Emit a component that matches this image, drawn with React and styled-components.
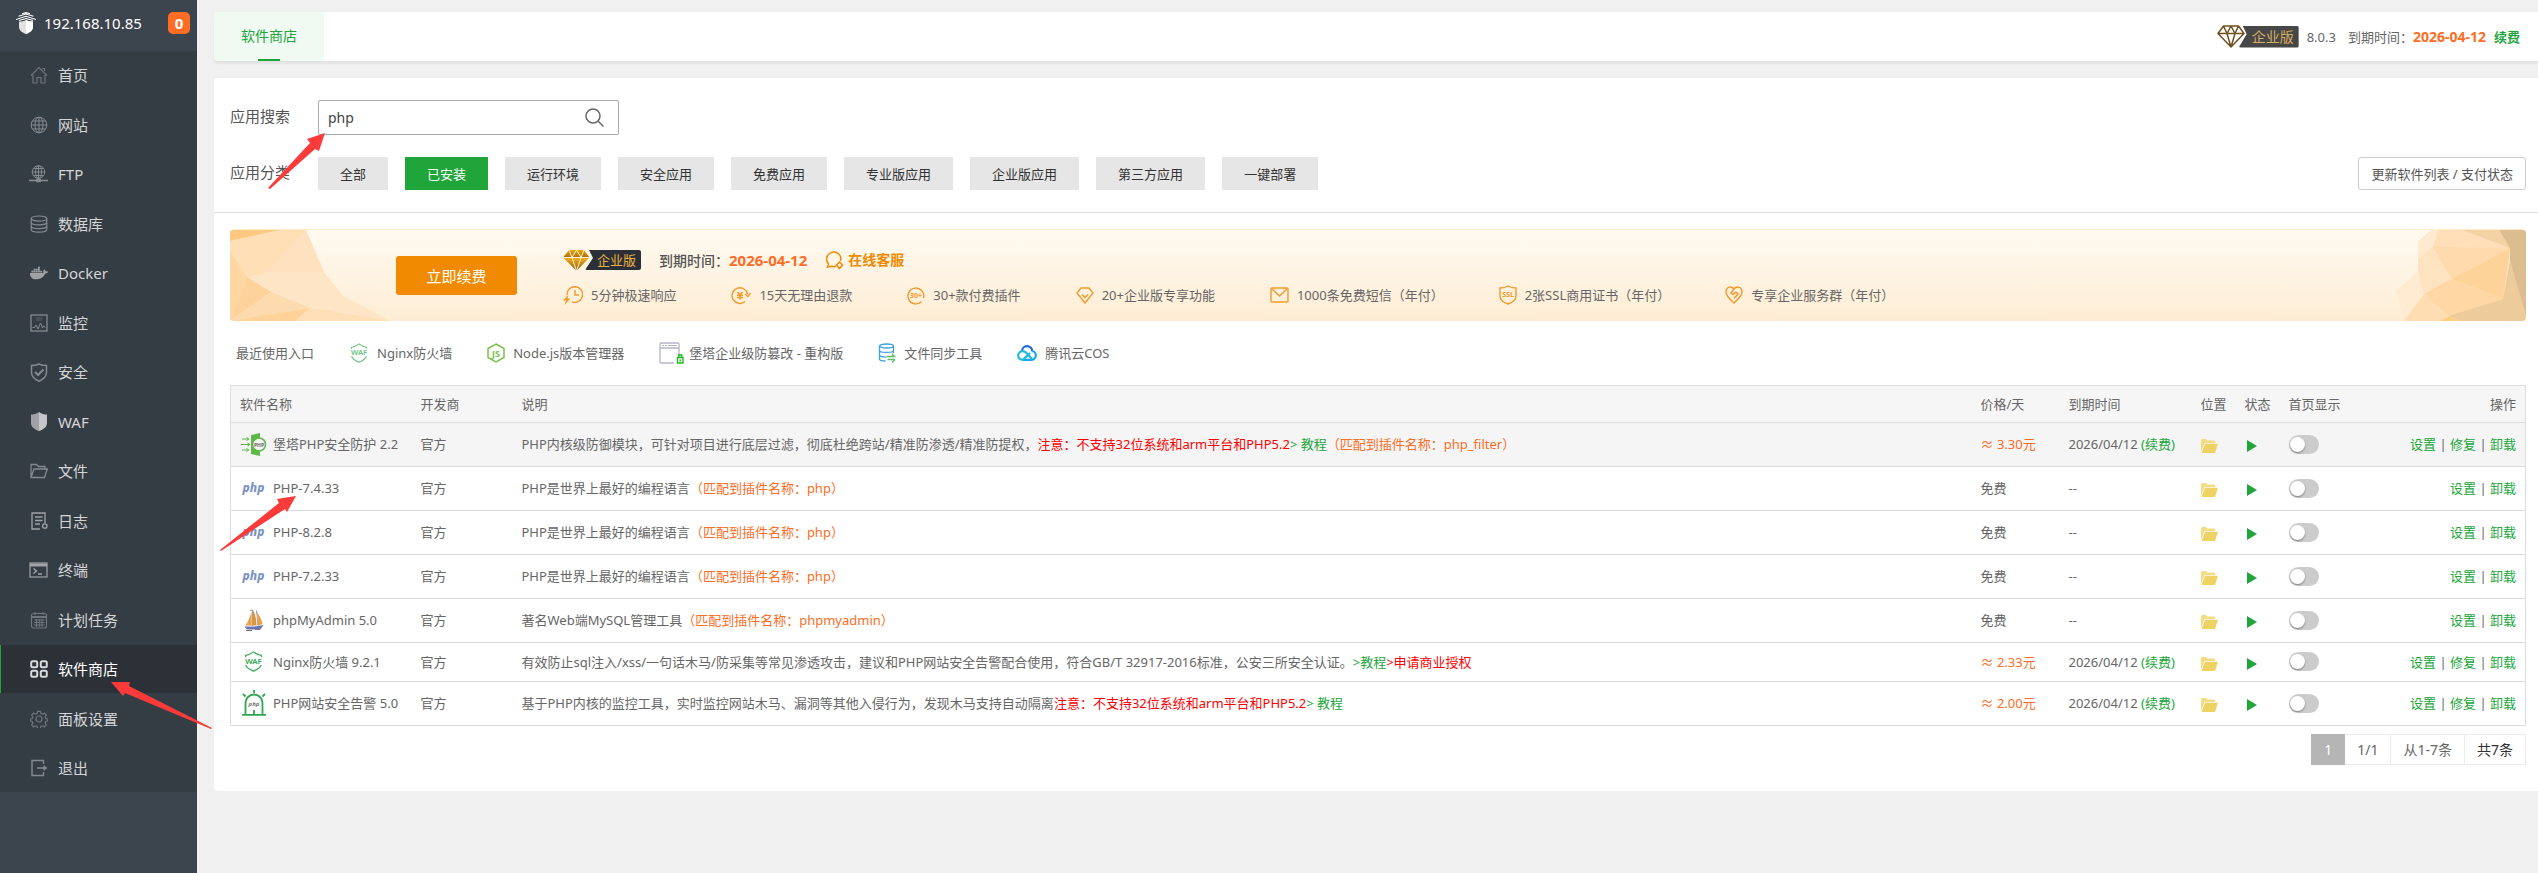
import React from 'react';
import styled, { createGlobalStyle } from 'styled-components';
import { FaDocker } from 'react-icons/fa';

const fontStack = "'Noto Sans', 'Noto Sans CJK SC', sans-serif";

/* ---------- icons ---------- */

const Line = ({ children, w = 18, h = 18, box = '0 0 18 18', sw = 1.2 }) => (
	<svg
		width={w}
		height={h}
		viewBox={box}
		fill='none'
		stroke='currentColor'
		strokeWidth={sw}
		aria-hidden='true'
	>
		{children}
	</svg>
);

const HomeIcon = () => (
	<Line>
		<path d='M1 9.5 9 1.5l8 8M3 9v8h4v-5.5h4V17h4V9M12.5 2.5h2V5' />
	</Line>
);

const GlobeIcon = () => (
	<Line sw={1}>
		<circle cx='9' cy='9' r='7.8' />
		<ellipse cx='9' cy='9' rx='4' ry='7.8' />
		<path d='M9 1v16M1 9h16M2.5 5h13M2.5 13h13' />
	</Line>
);

const FtpIcon = () => (
	<Line w={19} box='0 0 19 18' sw={1}>
		<circle cx='9.5' cy='7' r='6.3' />
		<ellipse cx='9.5' cy='7' rx='3' ry='6.3' />
		<path d='M9.5 1v13M3 7h13M4.5 3.5h10M4.5 10.5h10' />
		<path d='M0 15.5h19' strokeWidth='1.6' />
		<path d='M7 15.5h5' strokeWidth='3.4' />
	</Line>
);

const DatabaseIcon = () => (
	<Line>
		<ellipse cx='9' cy='3.6' rx='7.8' ry='2.6' />
		<path d='M1.2 3.6v11c0 1.5 3.5 2.6 7.8 2.6s7.8-1.1 7.8-2.6v-11M1.2 7.3c0 1.5 3.5 2.6 7.8 2.6s7.8-1.1 7.8-2.6M1.2 11c0 1.5 3.5 2.6 7.8 2.6s7.8-1.1 7.8-2.6' />
	</Line>
);

const DockerIcon = () => <FaDocker size={18} aria-hidden='true' />;

const MonitorIcon = () => (
	<Line sw={1.3}>
		<rect x='1' y='1' width='16' height='16' />
		<path d='M6 4h6M6 6h6' strokeWidth='1' opacity='0.5' />
		<path d='M2.5 13.5h2L6 11l2 4 2.5-6 2 5 1-2 2 1.5' strokeWidth='1' />
	</Line>
);

const SecurityIcon = () => (
	<Line h={19} box='0 0 18 19' sw={1.5}>
		<path d='M9 1c2.5 1.3 5 1.6 7.5 1.6v7c0 4-3 6.6-7.5 8.6-4.5-2-7.5-4.6-7.5-8.6v-7C4 2.6 6.5 2.3 9 1z' />
		<path d='m5 9 3 3 5.5-5.5' strokeWidth='2' />
	</Line>
);

const WafIcon = () => (
	<svg width='18' height='19' viewBox='0 0 18 19' aria-hidden='true'>
		<path d='M9 0c2.5 2 5.5 2.5 8 2.5V11c0 4-3.5 6.5-8 8z' fill='#c4c6c9' />
		<path d='M9 0C6.5 2 3.5 2.5 1 2.5V11c0 4 3.5 6.5 8 8z' fill='#a0a2a5' />
	</svg>
);

const FileIcon = () => (
	<Line sw={1.3}>
		<path d='M1 15.5V2.5h5.5l2 2H15V7M1 15.5 4 7h13.3l-2.8 8.5z' />
	</Line>
);

const LogIcon = () => (
	<Line sw={1.3}>
		<path d='M10 17H2V1h13v10M5 5h7.5M5 8.5h7.5M5 12h5' />
		<circle cx='14.8' cy='14' r='2.2' />
	</Line>
);

const TerminalIcon = () => (
	<Line w={19} box='0 0 19 18'>
		<rect x='1' y='2' width='17' height='14' />
		<path d='M1 4h17' strokeWidth='3' />
		<path d='m4.5 7.5 3 2.5-3 2.5M9 13h4' strokeWidth='1.4' />
	</Line>
);

const CalendarIcon = () => (
	<Line>
		<rect x='1.5' y='2.5' width='15' height='14.5' rx='2' />
		<path d='M1.5 6h15' strokeWidth='2' />
		<path
			d='M5 1v3M13 1v3M4 9h10.5M4 11.5h10.5M4 14h10.5M6.5 8v8M9.3 8v8M12 8v8'
			strokeWidth='1'
		/>
	</Line>
);

const StoreIcon = () => (
	<Line sw={2}>
		<rect x='1.2' y='1.2' width='6' height='6' rx='1.5' />
		<rect x='10.8' y='1.2' width='6' height='6' rx='1.5' />
		<rect x='1.2' y='10.8' width='6' height='6' rx='1.5' />
		<rect x='10.8' y='10.8' width='6' height='6' rx='1.5' />
	</Line>
);

const GearIcon = () => (
	<Line>
		<circle cx='9' cy='9' r='3' />
		<path d='M7.6 1.4h2.8l.5 2.1 1.5.7 2-1.1 1.9 1.9-1.1 2 .6 1.5 2 .6v1.8l-2 .6-.6 1.5 1.1 2-1.9 1.9-2-1.1-1.5.7-.5 2H7.6l-.5-2-1.5-.7-2 1.1-1.9-1.9 1.1-2-.6-1.5-2-.6V9.1l2-.6.6-1.5-1.1-2 1.9-1.9 2 1.1 1.5-.7z' />
	</Line>
);

const ExitIcon = () => (
	<Line sw={1.4}>
		<path d='M13.5 5V1.5H2v15h11.5V13M7 9h9' />
		<path d='m13.5 6 4 3-4 3z' fill='currentColor' stroke='none' />
	</Line>
);

const LogoIcon = () => (
	<svg width='20' height='22' viewBox='0 0 20 22' fill='#fff' aria-hidden='true'>
		<path
			d='M10 8c2 1 4.500 1.500 7 1.500V15c0 3.500-3 5.500-7 7-4-1.500-7-3.500-7-7V9.500C5.500 9.500 8 9 10 8z'
			fill='#e0e2e4'
		/>
		<path d='M10 8v14c4-1.500 7-3.500 7-7V9.500c-2.500 0-5-.5-7-1.500z' />
		<path
			d='M0 7.500 10 4.300l10 3.200M2.500 4.300 10 2l7.500 2.300M6 1.800 10 .6l4 1.200M3 8.500l7-2 7 2'
			fill='none'
			stroke='#fff'
			strokeWidth='1.1'
		/>
	</svg>
);

const SearchIcon = () => (
	<Line w={19} h={19} box='0 0 19 19' sw={1.5}>
		<circle cx='8' cy='8' r='7' />
		<path d='m13 13 5.5 5.5' />
	</Line>
);

const DiamondLine = () => (
	<svg
		width='30'
		height='23'
		viewBox='0 0 30 23'
		fill='none'
		stroke='#70511f'
		strokeWidth='1.5'
		strokeLinejoin='round'
		aria-hidden='true'
	>
		<path d='M6.5 1h15L27 8.5 14 22 1 8.5zM1 8.5h26M6.5 1l3.5 7.5L14 22l4-13.5L21.5 1M10 8.5 14 1l4 7.5' />
	</svg>
);

const DiamondSolid = () => (
	<svg width='30' height='21' viewBox='0 0 30 21' aria-hidden='true'>
		<defs>
			<linearGradient id='gold' x1='0' y1='0' x2='0' y2='1'>
				<stop offset='0' stopColor='#f0a30c' />
				<stop offset='0.35' stopColor='#a8700a' />
				<stop offset='0.4' stopColor='#f2ac1c' />
				<stop offset='1' stopColor='#8f5c06' />
			</linearGradient>
		</defs>
		<path d='M6 0h15l5.5 7.5L13.5 21 0 7.5z' fill='url(#gold)' />
		<path
			d='M0 7.5h27M6 0l3 7.5L13.5 21 18 7.5 21 0M9 7.5 13.5 0 18 7.5'
			fill='none'
			stroke='#fff3dd'
			strokeWidth='1'
		/>
	</svg>
);

const ServiceIcon = () => (
	<Line w={19} h={19} box='0 0 19 19' sw={1.5}>
		<path d='M11 15.3c-1.5.6-3 .5-4.3 0L2.5 16l1-3C.5 10 1 5 4.5 2.5s8.5-1.5 10.5 2c1 2 1 4 .3 5.5' />
		<path d='m14.5 11 3 3-3 3.5-3-3.5z' />
	</Line>
);

const SpeedIcon = () => (
	<Line w={20} h={20} box='0 0 20 20' sw={1.4}>
		<path d='M4 10A7.8 7.8 0 1 1 9 16.8M12 5v5h4' />
		<path d='M5.5 9.5 0 15.5h3L1.5 20l6-6.5H4.5z' fill='currentColor' stroke='none' />
	</Line>
);

const RefundIcon = () => (
	<Line w={20} h={19} box='0 0 20 19' sw={1.4}>
		<path d='M14 15.5A7.8 7.8 0 1 1 16.5 8M14 8l3 2.5L19.5 7' />
		<path d='m6.5 6 2.5 3 2.5-3M6 9.3h6M6 11.5h6M9 9v4.5' strokeWidth='1.6' />
	</Line>
);

const RingText = ({ text }) => (
	<Line w={18} h={19} box='0 0 18 19' sw={1.4}>
		<path d='M14.5 15.5A7.9 7.9 0 1 1 16.5 12' />
		<IconText x='9' y='12' textAnchor='middle' $size={7} $weight={700}>
			{text}
		</IconText>
	</Line>
);

const GemIcon = () => (
	<Line w={18} h={17} box='0 0 18 17' sw={1.4}>
		<path d='M5 1h8l4 5-8 10L1 6zM6 7.5l3 3 3-3' />
	</Line>
);

const MailIcon = () => (
	<Line w={19} h={16} box='0 0 19 16' sw={1.4}>
		<rect x='1' y='1' width='17' height='14' rx='1' />
		<path d='m2 2 7.5 7L17 2' />
	</Line>
);

const SslIcon = () => (
	<Line w={18} h={20} box='0 0 18 20' sw={1.4}>
		<path d='M9 1c2.5 1.5 5 2 8 2v8c0 4-3.5 6.5-8 8-4.500-1.5-8-4-8-8V3c3 0 5.5-.5 8-2z' />
		<IconText x='9' y='12' textAnchor='middle' $size={7} $weight={700}>
			SSL
		</IconText>
	</Line>
);

const HeartIcon = () => (
	<Line w={18} h={18} box='0 0 18 18' sw={1.5}>
		<path d='M9 17C5 13.5 1 9.5 1 6c0-3 2-5 4.5-5C7 1 8 1.8 9 3c1-1.2 2-2 3.5-2C15 1 17 3 17 6c0 3.5-4 7.5-8 11z' />
		<path d='M9 3 6 7l2 1.5L11 6M11 6l2 2-4 4.5' />
	</Line>
);

const WafShield = ({ size = 24, color = '#2fa650' }) => (
	<svg
		width={size}
		height={size}
		viewBox='0 0 24 24'
		fill='none'
		stroke={color}
		strokeWidth='1.3'
		aria-hidden='true'
	>
		<path d='M3 7V5c3.5-.5 6.500-2 9-4 2.500 2 5.500 3.500 9 4v2M3 16c1.500 3.500 5 5.500 9 7 4-1.500 7.500-3.500 9-7' />
		<IconText x='12' y='14.5' textAnchor='middle' $size={9} $weight={600} $color={color}>
			WAF
		</IconText>
	</svg>
);

const NodeIcon = () => (
	<svg
		width='18'
		height='20'
		viewBox='0 0 18 20'
		fill='none'
		stroke='#7cc04b'
		strokeWidth='1.5'
		aria-hidden='true'
	>
		<path d='m9 1 8 4.5v9L9 19l-8-4.5v-9z' />
		<IconText x='9' y='13.5' textAnchor='middle' $size={9} $weight={700} $color='#7cc04b'>
			JS
		</IconText>
	</svg>
);

const TamperIcon = () => (
	<svg width='25' height='22' viewBox='0 0 25 22' fill='none' aria-hidden='true'>
		<path
			d='M15 21H2a1 1 0 0 1-1-1V2a1 1 0 0 1 1-1h17a1 1 0 0 1 1 1v11M1 6h19'
			stroke='#b5b5c8'
			strokeWidth='1.3'
		/>
		<path d='M3 3.5h2M6 3.5h2M9 3.5h9' stroke='#b5b5c8' />
		<path
			d='M18.5 15.5H24V21h-5.500zM19.700 15.500V13h3v2.500M21.200 17.500v2'
			stroke='#20b820'
			strokeWidth='1.4'
		/>
	</svg>
);

const SyncIcon = () => (
	<svg
		width='18'
		height='20'
		viewBox='0 0 18 20'
		fill='none'
		stroke='#3ba3e0'
		strokeWidth='1.3'
		aria-hidden='true'
	>
		<ellipse cx='8.5' cy='3' rx='7' ry='2' />
		<path d='M1.5 3v13c0 1.2 2.5 2 6 2M15.5 3v7M1.5 7.5c0 2.5 14 2.5 14 0M1.5 12c0 1.5 3 2.2 7 2' />
		<path d='M9 13.5h7.5L14 11M17 16.5H9.5M14 19.5l3-3' stroke='#5bbf6c' />
	</svg>
);

const CloudIcon = () => (
	<svg
		width='20'
		height='16'
		viewBox='0 0 20 16'
		fill='none'
		strokeWidth='2.2'
		aria-hidden='true'
	>
		<path d='M5 6.5C5 3.5 7.2 1.2 10 1.2s5 2 5.2 4.8' stroke='#1f66e0' />
		<path d='M14.5 6c2.5 0 4.3 1.9 4.3 4.3s-1.800 4.500-4.300 4.500H6' stroke='#1aa6ee' />
		<path
			d='M13 8 6 14.8c-2.800 0-4.800-1.800-4.800-4.300S3 6.2 5.5 6.2c2 0 3.5 1 4.5 2.3l5 5.5'
			stroke='#22bcd8'
		/>
	</svg>
);

const PhpGuardIcon = () => (
	<svg width='26' height='23' viewBox='0 0 26 23' aria-hidden='true'>
		<path d='m10 2 9-2v23l-9-2z' fill='#5cb947' />
		<circle cx='18' cy='11.5' r='6.5' fill='#f5f5f5' stroke='#5cb947' strokeWidth='1.5' />
		<path
			d='M1 6h6M0 11.5h8M1 17h6M5.5 4.5 8 6 5.5 7.5M6.5 10 9 11.5 6.5 13M5.5 15.5 8 17l-2.5 1.5'
			fill='none'
			stroke='#5cb947'
			strokeWidth='1'
		/>
		<IconText x='18' y='13.5' textAnchor='middle' $size={5} $weight={700} $color='#666'>
			PHP
		</IconText>
	</svg>
);

const SailIcon = () => (
	<svg width='20' height='22' viewBox='0 0 20 22' aria-hidden='true'>
		<path d='M7.5 2v14.500h-6C4.500 12 6.500 7 7.500 2z' fill='#f0a03c' />
		<path d='M9 1c2.500 5 3.500 10 3.500 15.500h-4z' fill='#e8922a' />
		<path d='M13 3c3 4 5 8.500 5.500 12L14 16.500C14.300 12 14 7 13 3z' fill='#f0a03c' />
		<path
			d='M6 1.500 8.500 1l-.3 16M12.500 1.500l1.500 15'
			fill='none'
			stroke='#7c7c8c'
			strokeWidth='0.8'
		/>
		<path d='M.5 17.500h10l9-1.500-3 4.500H3z' fill='#6c78af' />
		<path d='M2 21.500h6M11 20.500h5' stroke='#777' />
	</svg>
);

const AlarmIcon = () => (
	<svg
		width='24'
		height='26'
		viewBox='0 0 24 26'
		fill='none'
		stroke='#2fa650'
		strokeWidth='1.8'
		aria-hidden='true'
	>
		<path d='M3.500 24V13a8.500 8.500 0 0 1 17 0v11M0 24.800h24M12 0v3M1 4l2.500 2.500M23 4l-2.500 2.500M12 20v4' />
		<IconText x='12' y='16' textAnchor='middle' $size={6} $weight={700} $italic $color='#777'>
			php
		</IconText>
	</svg>
);

const FolderIcon = () => (
	<svg width='17' height='14' viewBox='0 0 17 14' aria-hidden='true'>
		<path
			d='M0 12V1.5C0 .6.6 0 1.5 0H5l1.5 1.5H13c.8 0 1.3.5 1.3 1.3V4H3.5L0 13z'
			fill='#f3dc84'
		/>
		<path d='M4 4.8h13L14 14H.5z' fill='#efd264' />
	</svg>
);

const PlayIcon = () => (
	<svg width='11' height='12' viewBox='0 0 11 12' aria-hidden='true'>
		<path d='M0 0v12l10-6z' fill='#20a53a' />
	</svg>
);

const BannerLeft = () => (
	<svg width='161' height='91' viewBox='0 0 161 91' aria-hidden='true'>
		<path d='M0 0h76l18 42 19 24 48 25H0z' fill='#fee5c5' />
		<path d='M0 0h50L0 11z' fill='#fec880' />
		<path d='M0 11 50 0h26L37 42 17 47 0 22z' fill='#fedfb6' />
		<path d='M76 0 37 42l57 0z' fill='#fee2c0' />
		<path d='m0 22 17 25L0 91z' fill='#fed7a2' />
		<path d='m17 47 24 15L0 91z' fill='#fed29a' />
		<path d='m41 62 39 16L0 91z' fill='#fedbae' />
		<path d='m80 78-15 13H0z' fill='#fed298' />
		<path d='m80 78 81 13H65z' fill='#fedfb8' />
	</svg>
);

const BannerRight = () => (
	<svg width='130' height='91' viewBox='0 0 130 91' aria-hidden='true'>
		<path d='M35 0 22 12v29L0 62l10 29h120V0z' fill='#fee3c1' />
		<path d='m22 41 6 23-18 26L0 62z' fill='#feebd2' />
		<path d='M35 0h8l-6 17-15 12V12z' fill='#feead0' />
		<path d='M43 0h23l48 18-77-1z' fill='#fedfb8' />
		<path d='M66 0h37l11 18z' fill='#f3d3a5' />
		<path d='m37 17 77 1-58 31z' fill='#fedaac' />
		<path d='m114 18-7 51-51-20z' fill='#fed399' />
		<path d='m56 49 51 20-29 10-25 7-25-22z' fill='#fed7a4' />
		<path d='m28 64 25 22-8 5H8z' fill='#feddb2' />
		<path d='m53 86 54-17 7-38 16 55v5H64z' fill='#eecb9a' />
		<path d='M103 0h27v86l-16-55V18z' fill='#dcbd90' />
		<path d='m53 86 11 5H45z' fill='#fece80' />
	</svg>
);

const Arrows = () => (
	<ArrowLayer
		width='340'
		height='740'
		viewBox='0 0 340 740'
		fill='#fb3a3a'
		aria-hidden='true'
	>
		<path d='M325 133 307 139l3 4-42 45 2 1 45-40 4 2z' />
		<path d='m296 496-19 3 2 4-59 47 1 1 64-42 2 3z' />
		<path d='m111 682 19 0-1 4 83 42-1 1-86-36-2 3z' />
	</ArrowLayer>
);

/* ---------- inline text ---------- */

const Link = styled.a`
	color: #20a53a;
	font-weight: ${(p) => (p.$bold ? 700 : 400)};
	text-decoration: none;
`;

const WarnLink = styled(Link)`
	color: #f00;
`;

const Warn = styled.span`
	color: #f00;
`;

const Match = styled.span`
	color: #fc6d26;
`;

/* ---------- data ---------- */

const menu = [
	{ text: '首页', Icon: HomeIcon, dim: true },
	{ text: '网站', Icon: GlobeIcon },
	{ text: 'FTP', Icon: FtpIcon },
	{ text: '数据库', Icon: DatabaseIcon },
	{ text: 'Docker', Icon: DockerIcon, bright: true },
	{ text: '监控', Icon: MonitorIcon },
	{ text: '安全', Icon: SecurityIcon },
	{ text: 'WAF', Icon: WafIcon },
	{ text: '文件', Icon: FileIcon },
	{ text: '日志', Icon: LogIcon, bright: true },
	{ text: '终端', Icon: TerminalIcon, bright: true },
	{ text: '计划任务', Icon: CalendarIcon, dim: true },
	{ text: '软件商店', Icon: StoreIcon, active: true },
	{ text: '面板设置', Icon: GearIcon, dim: true },
	{ text: '退出', Icon: ExitIcon },
];

const categories = [
	'全部',
	'已安装',
	'运行环境',
	'安全应用',
	'免费应用',
	'专业版应用',
	'企业版应用',
	'第三方应用',
	'一键部署',
];

const perks = [
	{ text: '5分钟极速响应', Icon: SpeedIcon },
	{ text: '15天无理由退款', Icon: RefundIcon },
	{ text: '30+款付费插件', Icon: () => <RingText text='30+' /> },
	{ text: '20+企业版专享功能', Icon: GemIcon },
	{ text: '1000条免费短信（年付）', Icon: MailIcon },
	{ text: '2张SSL商用证书（年付）', Icon: SslIcon },
	{ text: '专享企业服务群（年付）', Icon: HeartIcon },
];

const recent = [
	{ text: 'Nginx防火墙', Icon: () => <WafShield size={20} color='#6cc184' /> },
	{ text: 'Node.js版本管理器', Icon: NodeIcon },
	{ text: '堡塔企业级防篡改 - 重构版', Icon: TamperIcon, tight: true },
	{ text: '文件同步工具', Icon: SyncIcon },
	{ text: '腾讯云COS', Icon: CloudIcon },
];

const phpDesc = (
	<>
		PHP是世界上最好的编程语言<Match>（匹配到插件名称：php）</Match>
	</>
);

const warning = '注意：不支持32位系统和arm平台和PHP5.2';

const rows = [
	{
		name: '堡塔PHP安全防护 2.2',
		icon: 'guard',
		price: '3.30',
		hover: true,
		desc: (
			<>
				PHP内核级防御模块，可针对项目进行底层过滤，彻底杜绝跨站/精准防渗透/精准防提权，
				<Warn>{warning}</Warn>
				<Link href='#'>&gt; 教程</Link>
				<Match>（匹配到插件名称：php_filter）</Match>
			</>
		),
	},
	{ name: 'PHP-7.4.33', icon: 'php', desc: phpDesc },
	{ name: 'PHP-8.2.8', icon: 'php', desc: phpDesc },
	{ name: 'PHP-7.2.33', icon: 'php', desc: phpDesc },
	{
		name: 'phpMyAdmin 5.0',
		icon: 'sail',
		desc: (
			<>
				著名Web端MySQL管理工具<Match>（匹配到插件名称：phpmyadmin）</Match>
			</>
		),
	},
	{
		name: 'Nginx防火墙 9.2.1',
		icon: 'waf',
		price: '2.33',
		short: true,
		desc: (
			<>
				有效防止sql注入/xss/一句话木马/防采集等常见渗透攻击，建议和PHP网站安全告警配合使用，符合GB/T
				32917-2016标准，公安三所安全认证。
				<Link href='#'>&gt;教程</Link>
				<WarnLink href='#'>&gt;申请商业授权</WarnLink>
			</>
		),
	},
	{
		name: 'PHP网站安全告警 5.0',
		icon: 'alarm',
		price: '2.00',
		desc: (
			<>
				基于PHP内核的监控工具，实时监控网站木马、漏洞等其他入侵行为，发现木马支持自动隔离
				<Warn>{warning}</Warn>
				<Link href='#'>&gt; 教程</Link>
			</>
		),
	},
];

/* ---------- page ---------- */

const Sidebar = () => (
	<Side>
		<SideHead>
			<LogoIcon />
			<Ip>192.168.10.85</Ip>
			<Count>0</Count>
		</SideHead>
		<Menu>
			{menu.map(({ text, Icon, active, dim, bright }) => (
				<li key={text}>
					<MenuLink href='#' $active={active} $dim={dim} $bright={bright}>
						<MenuIcon>
							<Icon />
						</MenuIcon>
						{text}
					</MenuLink>
				</li>
			))}
		</Menu>
	</Side>
);

const SoftTable = () => {
	const icons = {
		guard: <PhpGuardIcon />,
		php: <PhpMark>php</PhpMark>,
		sail: <SailIcon />,
		waf: <WafShield size={21} />,
		alarm: <AlarmIcon />,
	};

	return (
		<Table>
			<colgroup>
				<Col $w={181} />
				<Col $w={101} />
				<col />
				<Col $w={88} />
				<Col $w={132} />
				<Col $w={44} />
				<Col $w={44} />
				<Col $w={96} />
				<Col $w={150} />
			</colgroup>
			<thead>
				<tr>
					<Th>软件名称</Th>
					<Th>开发商</Th>
					<Th>说明</Th>
					<Th>价格/天</Th>
					<Th>到期时间</Th>
					<Th>位置</Th>
					<Th>状态</Th>
					<Th>首页显示</Th>
					<Th $right>操作</Th>
				</tr>
			</thead>
			<tbody>
				{rows.map((row) => (
					<Row key={row.name} $hover={row.hover} $short={row.short}>
						<Td>
							<Name>
								<NameIcon>{icons[row.icon]}</NameIcon>
								{row.name}
							</Name>
						</Td>
						<Td>官方</Td>
						<Td>{row.desc}</Td>
						<Td>{row.price ? <Match>≈ {row.price}元</Match> : '免费'}</Td>
						<Td>
							{row.price ? (
								<>
									2026/04/12 <Link href='#'>(续费)</Link>
								</>
							) : (
								'--'
							)}
						</Td>
						<Td>
							<IconButton aria-label='打开目录'>
								<FolderIcon />
							</IconButton>
						</Td>
						<Td>
							<IconButton aria-label='运行状态' $inset>
								<PlayIcon />
							</IconButton>
						</Td>
						<Td>
							<Switch type='checkbox' role='switch' aria-label='首页显示' />
						</Td>
						<Td $right>
							<Link href='#'>设置</Link> |{' '}
							{row.price && (
								<>
									<Link href='#'>修复</Link> |{' '}
								</>
							)}
							<Link href='#'>卸载</Link>
						</Td>
					</Row>
				))}
			</tbody>
		</Table>
	);
};

const App = () => {
	return (
		<Layout>
			<GlobalStyle />
			<Sidebar />
			<Main>
				<TopBar>
					<Tab>软件商店</Tab>
					<License>
						<Edition>
							<DiamondLine />
							<EditionName>企业版</EditionName>
						</Edition>
						<span>8.0.3</span>
						<Expire>
							到期时间：<b>2026-04-12</b>
						</Expire>
						<Link href='#' $bold>
							续费
						</Link>
					</License>
				</TopBar>

				<Panel>
					<Filters>
						<FilterRow>
							<FilterLabel as='label' htmlFor='app-search'>
								应用搜索
							</FilterLabel>
							<SearchBox>
								<SearchInput id='app-search' defaultValue='php' />
								<SearchButton aria-label='搜索'>
									<SearchIcon />
								</SearchButton>
							</SearchBox>
						</FilterRow>
						<FilterRow>
							<FilterLabel>应用分类</FilterLabel>
							<Categories>
								{categories.map((name) => (
									<Category key={name} $active={name === '已安装'}>
										{name}
									</Category>
								))}
							</Categories>
							<Refresh>更新软件列表 / 支付状态</Refresh>
						</FilterRow>
					</Filters>

					<Content>
						<Banner>
							<BannerLeft />
							<BannerBody>
								<Renew>立即续费</Renew>
								<BannerInfo>
									<BannerRow $gap={18}>
										<Edition $gold>
											<DiamondSolid />
											<EditionName $gold>企业版</EditionName>
										</Edition>
										<BannerExpire>
											到期时间：<b>2026-04-12</b>
										</BannerExpire>
										<Service href='#'>
											<ServiceIcon />
											在线客服
										</Service>
									</BannerRow>
									<BannerRow $gap={55}>
										{perks.map(({ text, Icon }) => (
											<Perk key={text}>
												<Icon />
												{text}
											</Perk>
										))}
									</BannerRow>
								</BannerInfo>
							</BannerBody>
							<BannerRight />
						</Banner>

						<Recent>
							<span>最近使用入口</span>
							{recent.map(({ text, Icon, tight }) => (
								<RecentLink href='#' key={text} $tight={tight}>
									<Icon />
									{text}
								</RecentLink>
							))}
						</Recent>

						<SoftTable />

						<Pager>
							<Page $current>1</Page>
							<Page>1/1</Page>
							<Page>从1-7条</Page>
							<Page $dark>共7条</Page>
						</Pager>
					</Content>
				</Panel>
			</Main>
			<Arrows />
		</Layout>
	);
};

const GlobalStyle = createGlobalStyle`
	* {
		box-sizing: border-box;
	}

	body {
		margin: 0;
		background: #f0f0f0;
		color: #666;
		font-family: ${fontStack};
		font-size: 13px;
		line-height: 20px;
	}

	button,
	input {
		font: inherit;
	}

	svg {
		display: block;
		flex: none;
	}
`;

const IconText = styled.text`
	font-family: ${fontStack};
	font-size: ${(p) => p.$size}px;
	font-weight: ${(p) => p.$weight};
	font-style: ${(p) => (p.$italic ? 'italic' : 'normal')};
	fill: ${(p) => p.$color || 'currentColor'};
	stroke: none;
`;

const ArrowLayer = styled.svg`
	position: absolute;
	top: 0;
	left: 0;
	pointer-events: none;
`;

const Layout = styled.div`
	position: relative;
	display: flex;
	gap: 17px;
	min-height: 100vh;
`;

const Side = styled.aside`
	flex: none;
	width: 197px;
	background: #3c444d;
`;

const SideHead = styled.div`
	display: flex;
	align-items: center;
	height: 51px;
	padding: 0 7px 6px 16px;
	gap: 8px;
`;

const Ip = styled.span`
	flex: 1;
	color: #fff;
	font-size: 15px;
`;

const Count = styled.span`
	width: 22px;
	height: 22px;
	border-radius: 5px;
	background: #ff6d24;
	color: #fff;
	font-size: 15px;
	font-weight: 700;
	line-height: 22px;
	text-align: center;
`;

const Menu = styled.ul`
	display: flex;
	flex-direction: column;
	justify-content: space-between;
	height: 741px;
	margin: 0;
	padding: 0;
	background: #353d44;
	list-style: none;
`;

const MenuLink = styled.a`
	display: flex;
	align-items: center;
	gap: 10px;
	height: 48px;
	padding-left: 28px;
	border-left: 1px solid ${(p) => (p.$active ? '#20a53a' : 'transparent')};
	background: ${(p) => (p.$active ? '#2c3138' : 'transparent')};
	color: ${(p) => (p.$active ? '#fff' : '#d3d5d7')};
	font-size: 15px;
	text-decoration: none;

	svg {
		color: ${(p) =>
			p.$active ? '#d8dadc' : p.$dim ? '#6f757a' : p.$bright ? '#a0a3a6' : '#858a8e'};
	}
`;

const MenuIcon = styled.span`
	display: flex;
	justify-content: center;
	width: 19px;
`;

const Main = styled.main`
	flex: 1;
	min-width: 0;
	padding-top: 12px;
`;

const TopBar = styled.header`
	display: flex;
	justify-content: space-between;
	height: 49px;
	margin-bottom: 17px;
	border-radius: 4px 0 0 4px;
	background: #fff;
	box-shadow: 0 3px 2px rgba(0, 0, 0, 0.05);
`;

const Tab = styled.div`
	display: flex;
	flex-direction: column;
	align-items: center;
	justify-content: space-between;
	width: 110px;
	padding-top: 14px;
	border-radius: 4px 0 0 4px;
	background: #f0f9f2;
	color: #20a53a;
	font-size: 14px;

	&::after {
		content: '';
		width: 22px;
		height: 2px;
		background: #20a53a;
	}
`;

const License = styled.div`
	display: flex;
	align-items: center;
	gap: 8px;
	padding-right: 18px;
`;

const Edition = styled.span`
	display: flex;
	align-items: center;
	height: ${(p) => (p.$gold ? 20 : 22)}px;

	svg {
		margin-right: -8px;
		z-index: 1;
	}
`;

const EditionName = styled.span`
	height: 100%;
	padding: 0 5px 0 ${(p) => (p.$gold ? 12 : 13)}px;
	border-radius: 2px;
	background: ${(p) => (p.$gold ? '#2b3038' : '#474747')};
	clip-path: polygon(4px 0, 100% 0, 100% 100%, 0 100%, 8px 40%);
	color: ${(p) => (p.$gold ? '#eeb040' : '#d6ab62')};
	font-size: ${(p) => (p.$gold ? 13 : 14)}px;
	line-height: ${(p) => (p.$gold ? 20 : 22)}px;
`;

const Expire = styled.span`
	margin-left: 4px;

	b {
		color: #fc6d26;
		font-size: 14px;
	}
`;

const Panel = styled.section`
	border-radius: 4px 0 0 4px;
	background: #fff;
`;

const Filters = styled.div`
	display: flex;
	flex-direction: column;
	gap: 22px;
	padding: 22px 12px 22px 16px;
	border-bottom: 1px solid #ddd;
`;

const FilterRow = styled.div`
	display: flex;
	align-items: center;
`;

const FilterLabel = styled.span`
	width: 88px;
	padding-bottom: 3px;
	color: #555;
	font-size: 15px;
`;

const SearchBox = styled.div`
	display: flex;
	align-items: center;
	width: 301px;
	height: 35px;
	border: 1px solid #aaa;
	border-radius: 2px;
`;

const SearchInput = styled.input`
	flex: 1;
	min-width: 0;
	padding: 0 9px;
	border: 0;
	outline: 0;
	background: none;
	color: #444;
	font-size: 14px;
`;

const SearchButton = styled.button`
	padding: 0 14px 0 0;
	border: 0;
	background: none;
	color: #666;
`;

const Categories = styled.div`
	display: flex;
	flex: 1;
	gap: 17px;
`;

const Category = styled.button`
	height: 33px;
	padding: 0 22px;
	border: 0;
	background: ${(p) => (p.$active ? '#20a53a' : '#e6e6e6')};
	color: ${(p) => (p.$active ? '#fff' : '#333')};
`;

const Refresh = styled.button`
	height: 33px;
	padding: 0 12px;
	border: 1px solid #ccc;
	border-radius: 3px;
	background: #fff;
	color: #555;
`;

const Content = styled.div`
	padding: 16px 12px 26px 16px;
`;

const Banner = styled.div`
	display: flex;
	height: 92px;
	overflow: hidden;
	border-top: 1px solid #feeccb;
	border-radius: 4px;
	background: linear-gradient(#fffaf1, #feedd4);
`;

const BannerBody = styled.div`
	display: flex;
	flex: 1;
	align-items: center;
	gap: 46px;
	padding-left: 5px;
`;

const Renew = styled.button`
	width: 121px;
	height: 39px;
	border: 0;
	border-radius: 3px;
	background: #f18a00;
	color: #fff;
	font-size: 15px;
`;

const BannerInfo = styled.div`
	display: flex;
	flex-direction: column;
	gap: 13px;
	padding-top: 4px;
`;

const BannerRow = styled.div`
	display: flex;
	align-items: center;
	gap: ${(p) => p.$gap}px;
	height: 22px;
`;

const BannerExpire = styled.span`
	color: #555;
	font-size: 14px;
	font-weight: 500;

	b {
		color: #fc6d26;
		font-size: 15px;
	}
`;

const Service = styled.a`
	display: flex;
	align-items: center;
	gap: 4px;
	color: #f18a00;
	font-size: 14px;
	font-weight: 700;
	text-decoration: none;
`;

const Perk = styled.span`
	display: flex;
	align-items: center;
	gap: 8px;

	svg {
		color: #f39a2b;
	}
`;

const Recent = styled.nav`
	display: flex;
	align-items: center;
	gap: 35px;
	height: 64px;
	padding-left: 6px;
`;

const RecentLink = styled.a`
	display: flex;
	align-items: center;
	gap: ${(p) => (p.$tight ? 5 : 8)}px;
	color: #666;
	text-decoration: none;
`;

const Table = styled.table`
	width: 100%;
	border: 1px solid #ddd;
	border-collapse: collapse;
	table-layout: fixed;
`;

const Col = styled.col`
	width: ${(p) => p.$w}px;
`;

const Th = styled.th`
	height: 37px;
	padding: 0 9px 1px;
	background: #f6f6f6;
	font-weight: 400;
	text-align: ${(p) => (p.$right ? 'right' : 'left')};
	white-space: nowrap;
`;

const Row = styled.tr`
	height: ${(p) => (p.$short ? 39 : 44)}px;
	border-top: 1px solid #ddd;
	background: ${(p) => (p.$hover ? '#f5f5f5' : '#fff')};
`;

const Td = styled.td`
	padding: 0 9px 1px;
	text-align: ${(p) => (p.$right ? 'right' : 'left')};
	white-space: nowrap;
`;

const Name = styled.span`
	display: flex;
	align-items: center;
	gap: 6px;
`;

const NameIcon = styled.span`
	display: flex;
	flex: none;
	justify-content: center;
	width: 27px;
`;

const PhpMark = styled.span`
	color: #7b93c4;
	font-size: 12px;
	font-style: italic;
	font-weight: 800;
`;

const IconButton = styled.button`
	display: block;
	padding: 4px 0 0 ${(p) => (p.$inset ? 2 : 0)}px;
	border: 0;
	background: none;
`;

const Switch = styled.input`
	display: flex;
	align-items: center;
	width: 30px;
	height: 19px;
	margin: 0;
	padding: 0 1px;
	border-radius: 10px;
	background: #ccc;
	appearance: none;

	&::before {
		content: '';
		width: 15px;
		height: 15px;
		border-radius: 50%;
		background: #fff;
		box-shadow: 0 1px 2px rgba(0, 0, 0, 0.4);
	}

	&:checked {
		justify-content: flex-end;
		background: #20a53a;
	}
`;

const Pager = styled.div`
	display: flex;
	justify-content: flex-end;
	margin-top: 8px;
`;

const Page = styled.span`
	padding: 0 12px;
	border: 1px solid ${(p) => (p.$current ? '#b5b5b5' : '#ececec')};
	border-left-width: ${(p) => (p.$current ? 1 : 0)}px;
	background: ${(p) => (p.$current ? '#b5b5b5' : '#fff')};
	color: ${(p) => (p.$current ? '#fff' : p.$dark ? '#333' : '#666')};
	font-size: 14px;
	line-height: 29px;
`;

export default App;
